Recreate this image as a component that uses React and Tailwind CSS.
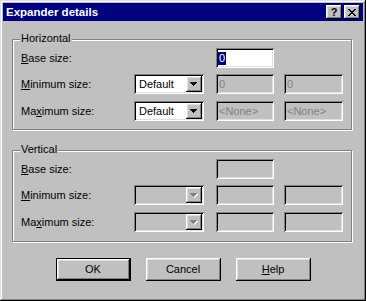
const raised =
  'shadow-[inset_-1px_-1px_#000,inset_1px_1px_#fff,inset_-2px_-2px_#808080,inset_2px_2px_#dfdfdf]'
const sunken =
  'shadow-[inset_1px_1px_#808080,inset_-1px_-1px_#fff,inset_2px_2px_#000,inset_-2px_-2px_#dfdfdf]'

const closeRows = ['11000011', '01100110', '00111100', '00011000', '00111100', '01100110', '11000011']

function CloseGlyph() {
  return (
    <svg width="8" height="7" viewBox="0 0 8 7" shapeRendering="crispEdges">
      {closeRows.map((row, y) =>
        row.split('').map((c, x) => (c === '1' ? <rect key={`${x}-${y}`} x={x} y={y} width="1" height="1" fill="#000" /> : null))
      )}
    </svg>
  )
}

function Arrow({ disabled }) {
  const rows = [7, 5, 3, 1]
  return (
    <svg width="8" height="5" viewBox="0 0 8 5" shapeRendering="crispEdges">
      {disabled &&
        rows.map((w, i) => <rect key={`s${i}`} x={i + 1} y={i + 1} width={w} height="1" fill="#fff" />)}
      {rows.map((w, i) => (
        <rect key={i} x={i} y={i} width={w} height="1" fill={disabled ? '#808080' : '#000'} />
      ))}
    </svg>
  )
}

function Label({ pre, k, post }) {
  return (
    <span className="w-[113px] shrink-0 leading-[13px]">
      {pre}
      <span className="underline underline-offset-[1px]">{k}</span>
      {post}
    </span>
  )
}

function Combo({ value, disabled }) {
  return (
    <div className={`flex h-[20px] w-[70px] shrink-0 p-[2px] ${sunken} ${disabled ? 'bg-[#c0c0c0]' : 'bg-white'}`}>
      <div className="flex flex-1 items-center pl-[3px] leading-[13px]">{value}</div>
      <div className={`flex h-[16px] w-[16px] items-center justify-center bg-[#c0c0c0] ${raised}`}>
        <Arrow disabled={disabled} />
      </div>
    </div>
  )
}

function Field({ value, white, selected, w = 'w-[58px]', className = '' }) {
  return (
    <div
      className={`flex h-[20px] ${w} shrink-0 items-center pl-[2px] leading-[13px] ${sunken} ${
        white ? 'bg-white text-black' : 'bg-[#c0c0c0] text-[#808080]'
      } ${className}`}
    >
      {selected ? <span className="bg-[#000080] px-[1px] text-white">{value}</span> : <span className="pl-[1px]">{value}</span>}
    </div>
  )
}

function Group({ label, className, children }) {
  return (
    <div
      className={`relative w-[340px] border border-[#808080] pl-[8px] pt-[8px] shadow-[inset_1px_1px_#fff,1px_1px_#fff] ${className}`}
    >
      <span className="absolute left-[7px] top-[-8px] bg-[#c0c0c0] px-[1px] leading-[13px]">{label}</span>
      {children}
    </div>
  )
}

function Section({ label, disabled, className }) {
  return (
    <Group label={label} className={className}>
      <div className="flex h-[20px] items-center">
        <Label k="B" post="ase size:" />
        <div className="w-[70px] shrink-0" />
        <Field value={disabled ? '' : '0'} white={!disabled} selected={!disabled} className="ml-[12px]" />
      </div>
      <div className="mt-[6px] flex h-[20px] items-center">
        <Label k="M" post="inimum size:" />
        <Combo value={disabled ? '' : 'Default'} disabled={disabled} />
        <Field value={disabled ? '' : '0'} className="ml-[12px]" />
        <Field value={disabled ? '' : '0'} w="w-[59px]" className="ml-[10px]" />
      </div>
      <div className="mt-[7px] flex h-[20px] items-center">
        <Label pre="Ma" k="x" post="imum size:" />
        <Combo value={disabled ? '' : 'Default'} disabled={disabled} />
        <Field value={disabled ? '' : '<None>'} className="ml-[12px]" />
        <Field value={disabled ? '' : '<None>'} w="w-[59px]" className="ml-[10px]" />
      </div>
    </Group>
  )
}

function Button({ children, isDefault }) {
  if (isDefault) {
    return (
      <div className="h-[23px] w-[75px] border border-black">
        <div className={`flex h-full w-full items-center justify-center bg-[#c0c0c0] pb-[1px] ${raised}`}>{children}</div>
      </div>
    )
  }
  return (
    <div className={`flex h-[23px] w-[75px] items-center justify-center bg-[#c0c0c0] pb-[1px] ${raised}`}>{children}</div>
  )
}

export default function App() {
  return (
    <div
      className="h-[301px] w-[366px] bg-[#c0c0c0] p-[3px] font-['Liberation_Sans',Arial,sans-serif] text-[11px] text-black shadow-[inset_-1px_-1px_#000,inset_1px_1px_#dfdfdf,inset_-2px_-2px_#808080,inset_2px_2px_#fff]"
    >
      <div className="flex h-[18px] items-center justify-between bg-[#000080] pl-[3px] pr-[3px]">
        <span className="text-[11.5px] font-bold leading-[14px] text-white">Expander details</span>
        <div className="flex gap-[2px]">
          <div className={`flex h-[14px] w-[16px] items-center justify-center bg-[#c0c0c0] text-[11px] font-bold leading-[12px] ${raised}`}>
            ?
          </div>
          <div className={`flex h-[14px] w-[16px] items-center justify-center bg-[#c0c0c0] ${raised}`}>
            <CloseGlyph />
          </div>
        </div>
      </div>

      <div className="pl-[9px] pt-[18px]">
        <Section label="Horizontal" className="h-[91px]" />
        <Section label="Vertical" disabled className="mt-[20px] h-[92px]" />

        <div className="mt-[16px] flex justify-center gap-[15px] pr-[9px]">
          <Button isDefault>OK</Button>
          <Button>Cancel</Button>
          <Button>
            <span>
              <span className="underline underline-offset-[1px]">H</span>elp
            </span>
          </Button>
        </div>
      </div>
    </div>
  )
}
